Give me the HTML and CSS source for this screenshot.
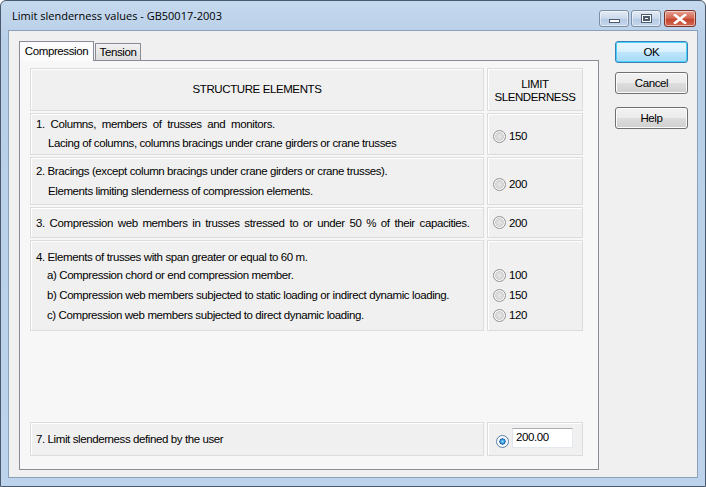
FILE: index.html
```html
<!DOCTYPE html>
<html>
<head>
<meta charset="utf-8">
<link rel="stylesheet" href="styles.css">
</head>
<body>
<div class="window">
  <div class="titlebar">
    <span class="title">Limit slenderness values - GB50017-2003</span>
    <div class="caps">
      <div class="cap cap-min"><span class="min-glyph"></span></div>
      <div class="cap cap-max"><span class="max-glyph"></span></div>
      <div class="cap cap-close">
        <svg width="14" height="10" viewBox="0 0 14 10"><path d="M2 1 L12 9 M12 1 L2 9" stroke="#fff" stroke-width="2.6" stroke-linecap="square"/></svg>
      </div>
    </div>
  </div>
  <div class="client">
    <div class="left">
      <div class="tabs">
        <div class="tab active">Compression</div>
        <div class="tab">Tension</div>
      </div>
      <div class="panel">
        <div class="row header">
          <div class="cell c1 center">STRUCTURE ELEMENTS</div>
          <div class="cell c2 center"><span>LIMIT<br>SLENDERNESS</span></div>
        </div>
        <div class="row r1">
          <div class="cell c1">
            <div class="line wide">1. Columns, members of trusses and monitors.</div>
            <div class="line ind">Lacing of columns, columns bracings under crane girders or crane trusses</div>
          </div>
          <div class="cell c2 mid"><span class="opt"><span class="radio"></span>150</span></div>
        </div>
        <div class="row r2">
          <div class="cell c1">
            <div class="line">2. Bracings (except column bracings under crane girders or crane trusses).</div>
            <div class="line ind">Elements limiting slenderness of compression elements.</div>
          </div>
          <div class="cell c2 mid"><span class="opt"><span class="radio"></span>200</span></div>
        </div>
        <div class="row r3">
          <div class="cell c1 mid">3. Compression web members in trusses stressed to or under 50 % of their capacities.</div>
          <div class="cell c2 mid"><span class="opt"><span class="radio"></span>200</span></div>
        </div>
        <div class="row r4">
          <div class="cell c1">
            <div class="line first">4. Elements of trusses with span greater or equal to 60 m.</div>
            <div class="line ind2">a) Compression chord or end compression member.</div>
            <div class="line ind2">b) Compression web members subjected to static loading or indirect dynamic loading.</div>
            <div class="line ind2">c) Compression web members subjected to direct dynamic loading.</div>
          </div>
          <div class="cell c2">
            <div class="line first"></div>
            <div class="line"><span class="opt"><span class="radio"></span>100</span></div>
            <div class="line"><span class="opt"><span class="radio"></span>150</span></div>
            <div class="line"><span class="opt"><span class="radio"></span>120</span></div>
          </div>
        </div>
        <div class="row r7">
          <div class="cell c1 mid">7. Limit slenderness defined by the user</div>
          <div class="cell c2 mid user">
            <span class="radio checked"></span>
            <div class="input">200.00</div>
          </div>
        </div>
      </div>
    </div>
    <div class="buttons">
      <div class="btn default">OK</div>
      <div class="btn">Cancel</div>
      <div class="btn help">Help</div>
    </div>
  </div>
</div>
</body>
</html>
```

FILE: styles.css
```css
html, body {
  margin: 0;
  padding: 0;
  width: 706px;
  height: 487px;
  overflow: hidden;
  background: #fff;
}

.window {
  box-sizing: border-box;
  width: 706px;
  height: 487px;
  border: 1px solid #4a5a6c;
  border-radius: 6px 6px 0 0;
  background: linear-gradient(#c5d9ee, #b8cfe8 40px, #bcd3eb);
  display: flex;
  flex-direction: column;
  padding: 0 7px 8px 7px;
}

.titlebar {
  height: 29px;
  display: flex;
  align-items: flex-start;
  flex: none;
}

.title {
  font-family: "Segoe UI", "Open Sans", "Noto Sans", sans-serif;
  font-size: 11px;
  color: #000;
  margin-left: 4px;
  margin-top: 7px;
}

.caps {
  margin-left: auto;
  margin-top: 9px;
  display: flex;
  gap: 2px;
  margin-right: 2px;
}

.cap {
  box-sizing: border-box;
  width: 30px;
  height: 17px;
  border: 1px solid #7d8fa7;
  border-radius: 3px;
  background: linear-gradient(#e4ecf6, #c9d8ea 50%, #b4c9e2 51%, #c5d7ec);
  display: flex;
  align-items: center;
  justify-content: center;
  box-shadow: inset 0 0 0 1px rgba(255,255,255,0.5);
}

.cap-close {
  width: 32px;
  margin-left: 1px;
  border-color: #7a3328;
  background: linear-gradient(#e8a293, #d1614b 50%, #c1402a 51%, #d36a50);
}

.min-glyph {
  display: block;
  width: 11px;
  height: 4px;
  margin-top: 5px;
  background: #fff;
  border: 1px solid #4d5b6e;
  box-sizing: border-box;
}

.max-glyph {
  display: block;
  width: 11px;
  height: 9px;
  border: 1px solid #4d5b6e;
  box-sizing: border-box;
  background: #fff;
  box-shadow: inset 0 0 0 1px #fff, inset 0 0 0 3px #4d5b6e;
}

.client {
  flex: 1;
  background: #f0f0f0;
  display: flex;
  padding: 10px 0 0 10px;
  border: 1px solid #8ba0b8;
  font-family: "Liberation Sans", Arial, sans-serif;
  font-size: 11.5px;
  letter-spacing: -0.4px;
  color: #000;
}

.left {
  width: 580px;
  display: flex;
  flex-direction: column;
}

.tabs {
  display: flex;
  height: 19px;
  align-items: flex-end;
  position: relative;
  z-index: 1;
}

.tab {
  box-sizing: border-box;
  height: 17px;
  width: 46px;
  text-align: center;
  border: 1px solid #898c95;
  border-bottom: none;
  background: linear-gradient(#f2f2f2, #dcdcdc);
  line-height: 16px;
  margin-left: 1px;
}

.tab.active {
  width: 75px;
  height: 20px;
  margin-left: 0;
  margin-bottom: -1px;
  padding-top: 1px;
  background: #fbfbfb;
  line-height: 16px;
}

.panel {
  box-sizing: border-box;
  height: 410px;
  border: 1px solid #898c95;
  background: #f7f7f7;
  padding: 7px 14px 13px 10px;
  display: flex;
  flex-direction: column;
  gap: 2px;
}

.row {
  display: flex;
  gap: 3px;
  flex: none;
}

.cell {
  box-sizing: border-box;
  border: 1px solid #dcdcdc;
  box-shadow: inset 1px 1px 0 #fff;
  background: #f0f0f0;
  padding-left: 5px;
}

.c1 { width: 454px; }
.c2 { width: 96px; }

.center {
  display: flex;
  align-items: center;
  justify-content: center;
  text-align: center;
  padding-left: 0;
  line-height: 13px;
}

.header { height: 43px; }
.header .c2 span { padding-top: 2px; }

.mid {
  display: flex;
  align-items: center;
}

.r1 { height: 42px; }
.r1 .c1 { padding-top: 1px; }
.r1 .line.wide { word-spacing: 3px; }
.r2 { height: 48px; }
.r2 .c1 { padding-top: 3px; }
.r3 { height: 31px; }
.r3 .c1 { word-spacing: 2px; }
.r4 { height: 91px; }
.r4 .cell { padding-top: 7px; }
.r7 { height: 34px; margin-top: auto; }

.line {
  height: 19px;
  line-height: 19px;
  white-space: nowrap;
}
.r2 .line { height: 20px; line-height: 20px; }
.r4 .line { height: 20px; line-height: 20px; }
.r4 .line.first { height: 17px; line-height: 18px; }

.ind { padding-left: 12px; }
.ind2 { padding-left: 11px; }

.opt {
  display: inline-flex;
  align-items: center;
  gap: 3px;
}

.r1 .c2 { padding-top: 4px; }
.r2 .c2 { padding-top: 6px; }

.radio {
  display: inline-block;
  box-sizing: border-box;
  width: 13px;
  height: 13px;
  border-radius: 50%;
  border: 1px solid #939393;
  background: radial-gradient(circle at 50% 50%, #e8e8e8 0, #d6d6d6 45%, #c9c9c9 60%, #f4f4f4 100%);
  box-shadow: inset 0 0 0 1px #fff;
  flex: none;
}

.radio.checked {
  border-color: #5a7fa6;
  background: radial-gradient(circle, #9ee0ff 0, #2e97dc 25%, #11539a 38%, #f3f6fa 42%, #dfe6ee 100%);
}

.user {
  padding-left: 8px;
  gap: 3px;
}
.user .radio { margin-top: 4px; }

.input {
  box-sizing: border-box;
  width: 61px;
  height: 20px;
  background: #fff;
  border: 1px solid #abadb3;
  border-color: #abadb3 #e3e9ef #e3e9ef #e2e3ea;
  padding-left: 3px;
  line-height: 17px;
  margin-top: -2px;
}

.buttons {
  margin-left: 16px;
  display: flex;
  flex-direction: column;
}

.btn {
  box-sizing: border-box;
  width: 73px;
  height: 22px;
  border: 1px solid #707070;
  border-radius: 3px;
  background: linear-gradient(#f2f2f2, #ebebeb 50%, #dddddd 51%, #cfcfcf);
  box-shadow: inset 0 0 0 1px #fcfcfc;
  display: flex;
  align-items: center;
  justify-content: center;
  margin-bottom: 9px;
}

.btn.default {
  border-color: #3c7fb1;
  background: linear-gradient(#eaf6fd, #d9f0fc 50%, #bee6fd 51%, #a7d9f5);
  box-shadow: inset 0 0 0 1px #48d0ff;
}

.btn.help { margin-top: 4px; }
```
